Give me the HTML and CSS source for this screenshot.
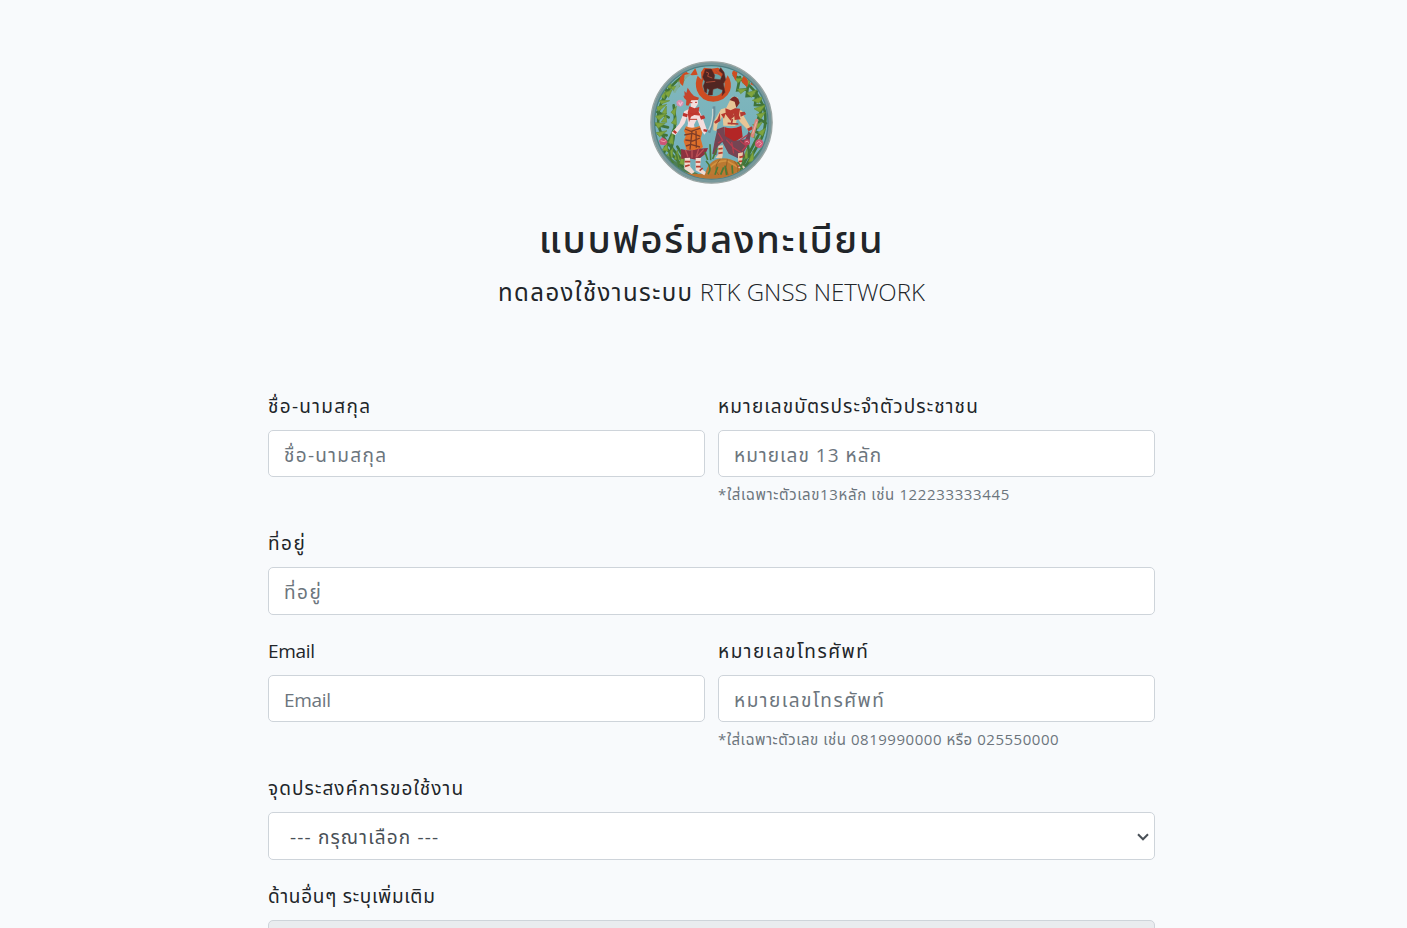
FILE: index.html
```html
<!DOCTYPE html>
<html lang="th">
<head>
<meta charset="utf-8">
<title>แบบฟอร์มลงทะเบียน</title>
<link rel="stylesheet" href="styles.css">
</head>
<body>
<main class="container">
  <header class="hero">
    <svg class="emblem" viewBox="30 27 369 369" aria-hidden="true">
      <defs>
        <clipPath id="disc"><circle cx="214" cy="211" r="169"/></clipPath>
        <linearGradient id="sky" x1="0" y1="0" x2="0" y2="1"><stop offset="0" stop-color="#83b8bd"/><stop offset="1" stop-color="#6faeba"/></linearGradient>
        <filter id="soft"><feGaussianBlur stdDeviation="1.1"/></filter>
      </defs>
      <circle cx="214.500" cy="211.500" r="182" fill="#78989b" stroke="#9aa5a3" stroke-width="4"/>
      <circle cx="214" cy="211" r="170" fill="url(#sky)" stroke="#4d8084" stroke-width="4"/>
      <g clip-path="url(#disc)" filter="url(#soft)">
        <path d="M40 270Q85 320 140 348L180 368H240L330 330 385 260V400H40Z" fill="#4d7d55"/>
        <path d="M105 350Q155 372 200 364L310 356Q270 390 214 390 150 386 105 350Z" fill="#ba7433"/>
        <g fill="none" stroke="#3f7338" stroke-width="8" stroke-linecap="round">
          <path d="M125 75Q65 120 54 190Q50 235 85 275L130 330M101 160Q112 220 92 300M70 100Q92 125 65 150M52 180L86 196M48 218L84 226M55 245L80 250M105 225L72 302M75 285L128 343M112 284L145 340"/>
          <path d="M282 70Q355 105 375 180Q382 240 350 285L318 342M300 75L292 115 322 112M325 90L320 132 350 130M350 118L345 159 374 160M370 160L355 198 378 214M360 205L344 238 368 248M355 250L310 338M322 270L330 320"/>
        </g>
        <g fill="#7fa53e" stroke="#668f39" stroke-width="2">
          <path d="M112 88l25-13-10 22zM92 104l28-3-19 16zM72 123l24-10-10 23zM57 145l32 1-25 10zM47 165l33-8-24 21zM46 193l35-9-24 21zM45 212l31 2-22 15zM48 242l33-6-22 18zM93 181l16-18-4 28zM94 213l14-19 1 25zM85 272l14-33 1 38zM66 294l15-19 3 23zM81 309l18-22-2 30zM103 322l9-28 7 30zM119 335l9-40 5 44zM78 104l14-18 2 25zM62 133l16-17-5 25zM66 184l13-22 0 24zM64 210l14-21 2 22z"/>
          <path d="M285 80l26-2-17 15zM306 91l27-8-12 21zM292 111l28 0-18 14zM320 123l31-10-16 23zM337 145l36-14-17 23zM342 170l35-12-17 23zM350 187l26-6-14 20zM338 218l29-7-14 20zM354 242l23-14-9 24zM327 250l17-20 1 29zM344 280l17-24 1 28zM309 321l12-30 2 28zM325 330l14-34 2 31z"/>
        </g>
        <path d="M150 65l-28 22-20 35" fill="none" stroke="#7fae9c" stroke-width="8"/>
        <g fill="#cd4e24">
          <path d="M125 70l10-17q6 11 15 12l-16 4-5 33q-16-12-9-25zM151 69l15-21 7 20-15 2zM276 65q2-16 17-7l-6 29zM304 88l9-24q17 25 8 42zM331 97l8-20 3 24z"/>
          <path d="M173 71Q163 93 171 116 183 148 220 149 257 146 270 116 278 92 263 70L253 91 247 56 234 47 214 50 192 47 183 61 185 83Z"/>
        </g>
        <path d="M187 99a33 33 0 1 0 67 0a33 33 0 1 0-67 0" fill="#69a4a8"/>
        <path d="M194 119l-4-17 5-13-7-14 8-23 18-1 10 19-2 11 19 2 8-17-12-10 5-9 10 14 5 22-7 12 5 26-9 10 2-17-16-6-13 4-2 17h-13l4-16-7-4-1 14z" fill="#512620" stroke="#6f2b22" stroke-width="1.500"/>
        <path d="M198 60l8 3-3 10 14 5M226 56l13 12M198 91l28-3" fill="none" stroke="#a94b38" stroke-width="3"/>

        <path d="M222 163Q225 200 207 242" fill="none" stroke="#668f9c" stroke-width="8"/>
        <path d="M218 170Q220 206 206 235" fill="none" stroke="#c7d4cf" stroke-width="4"/>

        <g>
          <path d="M151 139l22 0 1 16-9 14 14 10 9 19 13 37-7 13-9-10-14-37-9 17 4 22H139l5-26-3-20-7 20-28 36-12-7 24-28 15-37 20-10z" fill="#f4dddd"/>
          <path d="M134 131l-1-14 6 6 4-16q10 17 19 25l15 5-3 7-20 1-9 16-7-1 1-15q-8-6-9-14z" fill="#c5442b"/>
          <path d="M148 163l16 6 14-4-2 15 7 11-20-2-10 5-6 17-4-29z" fill="#c33a31"/>
          <path d="M130 182l14 5-3 9-13-4zM179 193l13-3 4 9-13 4zM103 234l8 7-4 5-9-7zM191 231l12 2-3 7-10-2z" fill="#bd332d"/>
          <path d="M150 184l11 3 11-6M150 202h21M150 152h7M165 151h6" stroke="#c0352d" stroke-width="3" fill="none"/>
          <path d="M138 223q18 9 41-1l8 20-5 18 7 25-14 12-35-2-9-28 7-17-6-14z" fill="#dd702c"/>
          <path d="M135 231l18 7 27-9M133 249l24-5 24 9M136 264l22 3 22-9M138 282l14-5 28 8M156 238l-6 55M168 237l1 50" fill="none" stroke="#7d3c28" stroke-width="4"/>
          <path d="M123 291q29 9 53-1l28-2-8 18-24 18-29-6-19 3z" fill="#8d3040"/>
          <path d="M136 293l8 21M156 293v24M176 291l-8 25M191 292l-21 23" stroke="#bd5055" stroke-width="4"/>
          <path d="M134 318l16-1 1 27 13 16-9 6-22-15zM167 318h16l-3 29 18 14-5 9-26-15z" fill="#f3dad0"/>
          <path d="M134 329h17M135 343l14-4M167 330h14M168 344h14M179 356l9-8" stroke="#b43c2d" stroke-width="5"/>
        </g>

        <path d="M197 360q8-27 30-37 33-12 69 11 20 15 17 30l-116 3z" fill="#bb7930"/>
        <path d="M210 348q20-23 52-21l35 20" fill="none" stroke="#d4923f" stroke-width="5"/>
        <path d="M240 322q-23 25-4 47M262 322q-8 26 2 47M283 328q15 16 10 34" fill="none" stroke="#976026" stroke-width="3"/>
        <g>
          <path d="M267 151l9-17 17 2 1 23-10 12 22 5 7 19 18 31-4 11-27-27-8-15-6 27-36-1-2-28-15 22-4 22-9-2 1-26 22-37 16-5z" fill="#e8c596"/>
          <path d="M269 144q13-20 26-3l4 12-10 14-5-18z" fill="#7c2925"/>
          <path d="M256 169l16 6 13-6 15 1-3 20 5 12-18 2-2-20-10 22-16-20-4 14-9-13 14-5z" fill="#b7372d"/>
          <path d="M240 182l-8 20-10 8 5 5 14-8M300 181l14-2 4 8-16 7M321 230l15-7 2 9-12 6M230 234l16-4-2 11-12 2" fill="#b33a30"/>
          <path d="M262 182l14 14 12-12M277 201l-3 17M263 214l32 2" fill="none" stroke="#b23a33" stroke-width="5"/>
          <path d="M253 225q25 9 51-4l4 34-23 14-31-8z" fill="#b32825"/>
          <path d="M232 232l20-8 3 28 26 15 35-5 10-25 6 8-4 28-16 26 4 18-22 2-28-14-19-35-14 14-4 26-12-4 7-39z" fill="#754452"/>
          <path d="M235 243l13 22-14 8M259 263l22 25 22 14M275 270l6 34M301 267l18 15-13 15M322 249l-22 16" fill="none" stroke="#b63d4e" stroke-width="4"/>
          <path d="M235 281l14-1-1 31-2 8-20-1 9-11zM294 304l15-3-4 35 13 13-4 7-20-10z" fill="#ebcaaa"/>
          <path d="M235 291l13-2M235 304l13-2M298 316l12-3M296 329l13-2M294 343l12-5" stroke="#b93b2c" stroke-width="5"/>
        </g>
        <path d="M350 205l-13 47" stroke="#d9857d" stroke-width="10" stroke-linecap="round"/>
        <path d="M350 209l-12 36" stroke="#ebb6a0" stroke-width="3"/>

        <path d="M109 150q12-14 22 1-1 13-11 13l-9-4z" fill="#d990b0"/>
        <path d="M116 151l5 8 6-9" fill="none" stroke="#f1bdd1" stroke-width="4"/>
        <path d="M57 266l10-10 10 6 6 8-7 10-15-2z" fill="#ce5776"/>
        <circle cx="321" cy="271" r="9" fill="#bd4156"/><circle cx="358" cy="275" r="13" fill="#cf5c78"/>
        <path d="M62 266l10 3 7-4M316 270l6-3 4 5M350 274l7-6 8 7-8 6" fill="none" stroke="#f09ba6" stroke-width="3"/>
        <g fill="none" stroke="#4a7b38" stroke-width="5">
          <path d="M100 334q-12-17-11-36M117 345l-8-40M204 367q14-20-6-40M225 368l8-24M242 368l9-22M260 369l-5-28M278 365l-2-25M301 357l12-44M310 354l-17-24M212 325l-2-48M218 321l13-32M203 324l-8-24"/>
        </g>
      </g>
    </svg>
    <h1 class="title">แบบฟอร์มลงทะเบียน</h1>
    <p class="subtitle"><span class="subtitle-thai">ทดลองใช้งานระบบ</span> <span>RTK GNSS NETWORK</span></p>
  </header>

  <form class="form">
    <div class="row row-hinted">
      <div class="field">
        <label class="label t-name" for="name">ชื่อ-นามสกุล</label>
        <input class="control t-name" id="name" placeholder="ชื่อ-นามสกุล">
      </div>
      <div class="field">
        <label class="label t-card" for="card">หมายเลขบัตรประจำตัวประชาชน</label>
        <input class="control t-digits" id="card" placeholder="หมายเลข 13 หลัก">
        <small class="hint">*ใส่เฉพาะตัวเลข13หลัก เช่น 122233333445</small>
      </div>
    </div>
    <div class="row">
      <div class="field">
        <label class="label t-address" for="address">ที่อยู่</label>
        <input class="control control-wide t-address" id="address" placeholder="ที่อยู่">
      </div>
    </div>
    <div class="row row-hinted">
      <div class="field">
        <label class="label t-email" for="email">Email</label>
        <input class="control t-email" id="email" placeholder="Email">
      </div>
      <div class="field">
        <label class="label t-phone" for="phone">หมายเลขโทรศัพท์</label>
        <input class="control t-phone" id="phone" placeholder="หมายเลขโทรศัพท์">
        <small class="hint hint-phone">*ใส่เฉพาะตัวเลข เช่น 0819990000 หรือ 025550000</small>
      </div>
    </div>
    <div class="row">
      <div class="field">
        <label class="label t-purpose" for="purpose">จุดประสงค์การขอใช้งาน</label>
        <div class="select-wrap">
          <select class="control control-wide select" id="purpose"><option>--- กรุณาเลือก ---</option></select>
          <svg class="chevron" viewBox="0 0 12 8" aria-hidden="true"><path d="M1 1.300L6 6.300 11 1.300"/></svg>
        </div>
      </div>
    </div>
    <div class="row">
      <div class="field">
        <label class="label t-other" for="other">ด้านอื่นๆ ระบุเพิ่มเติม</label>
        <input class="control control-wide" id="other" disabled>
      </div>
    </div>
  </form>
</main>
</body>
</html>
```
FILE: styles.css
```css
* { box-sizing: border-box; }
html { height: 100%; overflow: hidden; }
body {
  margin: 0;
  height: 100%;
  overflow: hidden;
  background: #f8fafc;
  color: #212529;
  font-family: "Open Sans", "Noto Sans", "Noto Sans Thai", sans-serif;
  font-size: 19px;
  line-height: 29px;
}
.container { width: 887px; margin-left: 268px; }
.hero {
  display: flex;
  flex-direction: column;
  align-items: center;
  height: 392px;
  padding-top: 61px;
}
.emblem { display: block; width: 123px; height: 123px; }
.title {
  margin: 31px 0 0;
  font-size: 38px;
  font-weight: 500;
  line-height: 46px;
  letter-spacing: 1.7px;
  white-space: nowrap;
}
.subtitle {
  margin: 13px 0 0;
  font-size: 24px;
  font-weight: 300;
  line-height: 36px;
  white-space: nowrap;
}
.subtitle-thai { font-weight: 400; letter-spacing: 1.4px; }
.row { display: flex; gap: 13px; height: 108px; }
.row-hinted { height: 137px; }
.field { flex: 1; min-width: 0; }
.label { display: block; height: 29px; margin-bottom: 9px; white-space: nowrap; }
.control {
  display: block;
  width: 100%;
  height: 47px;
  padding: 9px 15px 7px;
  border: 1px solid #ced4da;
  border-radius: 5px;
  background: #fff;
  color: #495057;
  font-family: inherit;
  font-size: inherit;
}
.control-wide { height: 48px; }
.control::placeholder { color: #6c757d; opacity: 1; }
.control:disabled { background: #e9ecef; }
.select-wrap { position: relative; }
.select { appearance: none; padding-left: 21px; letter-spacing: 1.15px; }
.chevron {
  position: absolute;
  top: 21px;
  right: 6px;
  width: 12px;
  height: 8px;
  fill: none;
  stroke: #495057;
  stroke-width: 2;
  pointer-events: none;
}
.hint {
  display: block;
  margin-top: 5px;
  color: #6c757d;
  font-size: 15px;
  line-height: 24px;
  letter-spacing: 0.63px;
  white-space: nowrap;
}
.hint-phone { letter-spacing: 0.53px; }
.t-name { letter-spacing: 1.3px; }
.t-card { letter-spacing: 1.12px; }
.t-digits { letter-spacing: 1.05px; }
.t-address { letter-spacing: 1.5px; }
.t-email { letter-spacing: -0.3px; }
.t-phone { letter-spacing: 1.5px; }
.t-purpose { letter-spacing: 1.08px; }
.t-other { letter-spacing: 0.7px; }
```
